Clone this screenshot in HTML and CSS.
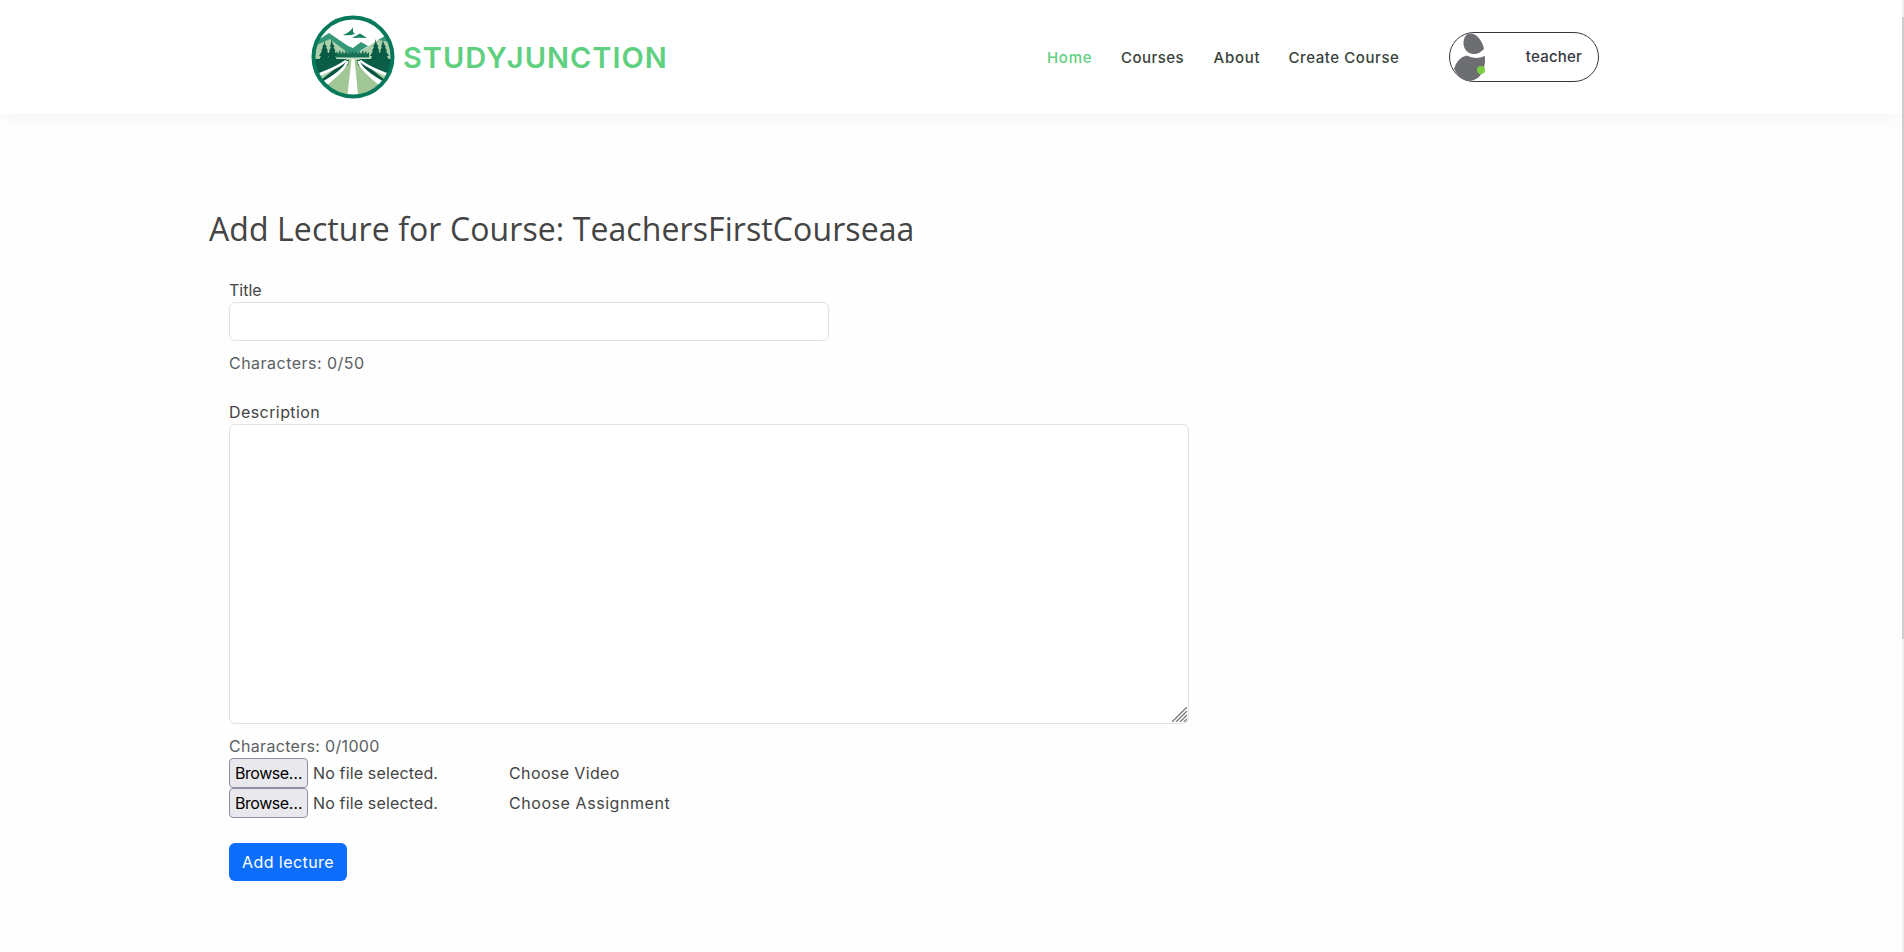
FILE: index.html
```html
<!DOCTYPE html>
<html lang="en">
<head>
<meta charset="utf-8">
<title>StudyJunction</title>
<link rel="stylesheet" href="styles.css">
</head>
<body>
<div class="page">
<header class="header">
  <a class="brand">
    <svg class="logo" viewBox="0 0 84 84">
      <defs><clipPath id="disc"><circle cx="42" cy="42" r="38.500"/></clipPath></defs>
      <circle cx="42" cy="42" r="40" fill="#fdfefd"/>
      <g clip-path="url(#disc)">
        <path d="M0 30L18 22L42 36L50 36L75 20L84 24V84H0Z" fill="#abcfa8"/>
        <path d="M4 27L18 18L37 31L42 33L50 27L57 31L49 36L43 40L37 38L19 24L4 31Z" fill="#34977a"/>
        <path d="M84 22L76 20L67 25L74 26L84 29Z" fill="#34977a"/>
        <path d="M25 43V38l1-2 1 3 2-4 1 4 2-3 1 3 2-3 2 3 2-3 1 3 2-3 1 3 2-3 2 3 1-3 2 3 2-4 1 4 2-3 1 3 2-2V43Z" fill="#156f52"/>
        <path d="M0 44L36 44L0 66Z M84 44L48 44L84 66Z" fill="#0a5d46"/>
        <path d="M0 84L0 76L38 44H46L84 76V84Z" fill="#a0c795"/>
        <path d="M35 45H38L37 50L10 73L5 69Z M49 45H46L47 50L74 73L79 69Z" fill="#075540"/>
        <path d="M3 60Q29 50 34 45L36 46Q31 52 4 63Z M81 60Q55 50 50 45L48 46Q53 52 80 63Z" fill="#fff"/>
        <path d="M7 69Q33 55 35 46L37.500 46Q37 54 11 74Z M77 69Q51 55 49 46L46.500 46Q47 54 73 74Z" fill="#fff"/>
        <path d="M25 42.500H59V43.800H25Z" fill="#d5e8d4"/>
        <path d="M40.500 44H43.500L47.500 84H36Z" fill="#fff"/>
        <path d="M13 25l1 4 2 3-1 0 2 4-1 0 3 5-2 0 2 4H8l2-4-2 0 3-5-1 0 2-4-1 0 2-3Z M20.500 24l1 4 2 4-1 0 2 4-1 0 3 5-2 0 1 4H16l2-4-2 0 3-5-1 0 2-4-1 0 1-4Z M64.500 24l1 4 2 4-1 0 2 4-1 0 3 5-2 0 1 4H60l1-4-2 0 3-5-1 0 2-4-1 0 2-4Z M72 25l1 4 2 3-1 0 2 4-1 0 3 5-2 0 2 4H67l2-4-2 0 3-5-1 0 2-4-1 0 1-3Z" fill="#095b45"/>
      </g>
      <path d="M32 20Q39 17 42 12.500V17L44 19Q38 21 32 20Z M41 23L49 18.500L56 23Q48 22.500 41 23Z" fill="#168063"/>
      <circle cx="42" cy="42" r="39.500" fill="none" stroke="#07795b" stroke-width="4"/>
    </svg>
    <span class="brand-name">STUDYJUNCTION</span>
  </a>
  <nav class="nav">
    <a class="nav-link home active">Home</a>
    <a class="nav-link courses">Courses</a>
    <a class="nav-link about">About</a>
    <a class="nav-link create">Create Course</a>
  </nav>
  <div class="user">
    <svg class="avatar" viewBox="0 0 40 50">
      <path d="M21 1.500C27 1.500 33 10 34 17C31 20 28 22 24 22C17 22 13 16 13.500 10Q14 1.500 21 1.500Z" fill="#6c6e72"/>
      <path d="M4 37Q7 26 16.500 23.500Q25 28 35 24Q36 37 29 45Q24 49 18 49Q9 47 4 37Z" fill="#6c6e72"/>
      <circle cx="31" cy="38" r="4" fill="#7dce42"/>
    </svg>
    <span class="user-name">teacher</span>
  </div>
</header>
<main class="main">
  <h2 class="heading">Add Lecture for Course: TeachersFirstCourseaa</h2>
  <form class="form">
    <label class="label" for="title">Title</label>
    <input class="field" id="title" type="text">
    <div class="count">Characters: 0/50</div>
    <label class="label desc-label" for="description">Description</label>
    <div class="area-wrap">
      <textarea class="field area" id="description"></textarea>
      <svg class="grip" viewBox="0 0 15 15"><path d="M0 15L15 0M4 15L15 4M8 15L15 8M12 15L15 12" stroke="#777" stroke-width="1.300"/></svg>
    </div>
    <div class="count count-long">Characters: 0/1000</div>
    <div class="file"><span class="browse">Browse…</span><span class="none">No file selected.</span><span class="choose">Choose Video</span></div>
    <div class="file"><span class="browse">Browse…</span><span class="none">No file selected.</span><span class="choose assignment">Choose Assignment</span></div>
    <button class="submit" type="button">Add lecture</button>
  </form>
</main>
</div>
<div class="scrollbar"><div class="thumb"></div></div>
</body>
</html>
```
FILE: styles.css
```css
* { box-sizing: border-box; }
body {
  margin: 0;
  height: 952px;
  display: flex;
  overflow: hidden;
  background: #fefefe;
  color: #444;
  font: 16px/24px Inter, sans-serif;
}
.page { width: 1902px; overflow: hidden; }
.header {
  height: 114px;
  padding: 0 303px 0 311px;
  display: flex;
  align-items: center;
  background: #fff;
  box-shadow: 0 0 18px rgba(0, 0, 0, .06);
}
.brand { display: flex; align-items: center; width: 736px; gap: 8px; }
.logo { width: 84px; height: 84px; }
.brand-name { padding-top: 2px; color: #5fcf80; font-weight: 600; font-size: 29px; letter-spacing: 1px; }
.nav { display: flex; width: 402px; padding-top: 2px; font-size: 15px; font-weight: 500; white-space: nowrap; }
.nav-link { color: #37423b; }
.nav-link.active { color: #5fcf80; }
.home { width: 74px; letter-spacing: .7px; }
.courses { width: 92.5px; letter-spacing: .45px; }
.about { width: 75px; letter-spacing: .75px; }
.create { letter-spacing: .57px; }
.user {
  width: 150px;
  height: 50px;
  display: flex;
  align-items: center;
  justify-content: space-between;
  padding-right: 16px;
  border: 1px solid #37373f;
  border-radius: 25px;
  font-size: 15px;
  font-weight: 500;
  letter-spacing: .2px;
  color: #37373f;
}
.avatar { width: 40px; height: 50px; }
.main { padding: 96px 0 0 209px; }
.heading { margin: 0; font: 400 32px/38px "Open Sans", sans-serif; letter-spacing: .09px; white-space: nowrap; }
.form { padding: 30px 0 0 20px; }
.label, .count { display: block; height: 24px; }
.field {
  display: block;
  width: 600px;
  height: 39px;
  border: 1px solid #dee2e6;
  border-radius: 6px;
  background: #fff;
  outline: 0;
}
.count { margin-top: 10px; color: #5a5f64; letter-spacing: .48px; }
.count-long { letter-spacing: .32px; }
.desc-label { margin-top: 25px; letter-spacing: .42px; }
.area-wrap { position: relative; width: 960px; }
.area { width: 960px; height: 300px; resize: none; }
.grip { position: absolute; right: 2px; bottom: 2px; width: 15px; height: 15px; }
.file { display: flex; height: 30px; align-items: center; }
.browse {
  width: 79px;
  height: 30px;
  padding-left: 5px;
  line-height: 28px;
  letter-spacing: -.45px;
  color: #000;
  background: #e9e9ed;
  border: 1px solid #8f8f9d;
  border-radius: 4px;
}
.none { width: 196px; margin-left: 5px; letter-spacing: .15px; }
.choose { letter-spacing: .38px; }
.assignment { letter-spacing: .56px; }
.submit {
  width: 118px;
  height: 38px;
  margin-top: 25px;
  padding: 0;
  border: 0;
  border-radius: 6px;
  color: #fff;
  background: #0d6efd;
  font: inherit;
  letter-spacing: .45px;
}
.scrollbar { width: 2px; height: 952px; padding-top: 17px; background: #f0f0f0; }
.thumb { height: 622px; background: #cdcdcd; }
```
